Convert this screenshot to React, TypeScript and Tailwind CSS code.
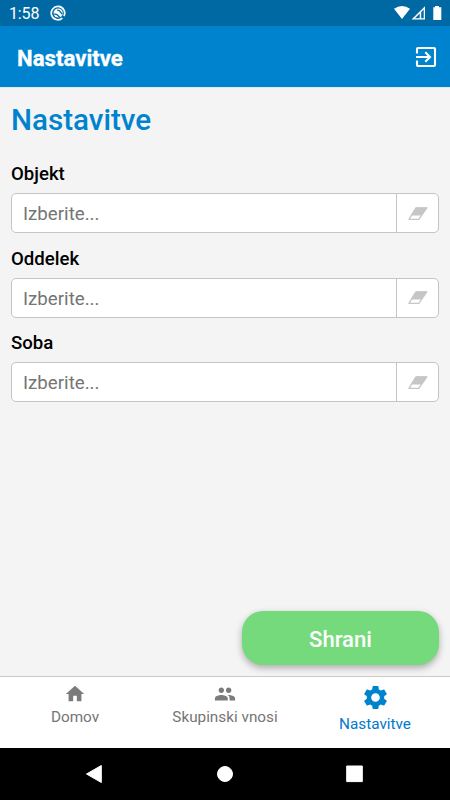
import React from "react";

function EraserIcon() {
  return (
    <svg className="mt-[1px]" width="20" height="14" viewBox="0 0 20 14">
      <path d="M7.7 .6H19.3L13.6 8.4H2.6Z" fill="#c6c6c6" />
      <path d="M7.9 1H18.8L10.8 12.4H1Z" fill="none" stroke="#c6c6c6" strokeWidth="1.3" strokeLinejoin="round" />
    </svg>
  );
}

function Field({ label }: { label: string }) {
  return (
    <div className="flex h-[84.5px] flex-col">
      <label className="h-[31px] pt-[1px] text-[18.6px] leading-[22px] font-medium text-black">{label}</label>
      <div className="flex h-[40px] overflow-hidden rounded-[5px] border border-[#c4c4c4] bg-white">
        <div className="flex flex-1 items-center pt-[2px] pl-[11px] text-[18.7px] leading-[22px] text-[#757575]">Izberite...</div>
        <button className="flex w-[42px] items-center justify-center border-l border-[#c4c4c4]">
          <EraserIcon />
        </button>
      </div>
    </div>
  );
}

export default function App() {
  return (
    <div className="flex h-[800px] w-[450px] flex-col overflow-hidden bg-[#f4f4f4] font-['Roboto',sans-serif]">
      <div className="flex h-[26px] shrink-0 items-center bg-[#0069a3] pl-[9px] text-white">
        <span className="w-[41px] pt-[2px] text-[16px] leading-[18px] tracking-[-0.15px]">1:58</span>
        <svg width="16" height="16" viewBox="0 0 16 16" fill="none">
          <path d="M12.4 13.1A6.7 6.7 0 1 1 13.9 11.2" stroke="white" strokeWidth="1.7" />
          <circle cx="8.2" cy="8" r="4.6" fill="white" />
          <path d="M4.2 8.8L6.9 9.6L10 12.4" stroke="#0069a3" strokeWidth="1.4" />
          <path d="M7.2 5.2L9.2 5.5L12.2 9" stroke="#0069a3" strokeWidth="1.3" />
        </svg>
        <svg className="ml-[328px]" width="50" height="18" viewBox="394 4 50 18">
          <path d="M394 8.7Q402 3.2 410 8.7L402 19Z" fill="white" />
          <path d="M411.5 19.6L425 6.2V19.6ZM419.7 13.4L415 18.2H419.7ZM421.2 12V18.2H423.7V9.5Z" fill="white" fillRule="evenodd" />
          <path d="M433.3 7.3H435V6H439V7.3H441.3V20H433.3Z" fill="white" />
        </svg>
      </div>
      <header className="flex h-[61px] shrink-0 items-center justify-between bg-[#0083cf] pr-[13px] pl-[17px] text-white">
        <h1 className="pt-[2px] text-[22.2px] leading-[26px] font-bold [-webkit-text-stroke:0.3px_white]">Nastavitve</h1>
        <svg className="mt-[1px]" width="22" height="22" viewBox="0 0 22 22" fill="none" stroke="white" strokeWidth="2.1">
          <path d="M2 7.5V3Q2 2 3 2H19Q20 2 20 3V19Q20 20 19 20H3Q2 20 2 19V14.5M1 11H14M10.3 6.3L15 11L10.3 15.7" />
        </svg>
      </header>
      <main className="flex flex-1 flex-col border-t border-[#dfe9ef] px-[11px] pt-[13px]">
        <h2 className="h-[61px] text-[29.6px] leading-[38px] font-medium text-[#0083cf]">Nastavitve</h2>
        <Field label="Objekt" />
        <Field label="Oddelek" />
        <Field label="Soba" />
        <button className="mt-auto mb-[11px] h-[54px] w-[197px] self-end rounded-[21px] bg-[#75da7b] pt-[2px] text-[22.1px] leading-[26px] font-medium text-white shadow-[0_3px_7px_rgba(0,0,0,0.3)]">
          Shrani
        </button>
      </main>
      <nav className="grid h-[72px] shrink-0 grid-cols-3 border-t border-[#c9c9c9] bg-white text-[15.3px] leading-[18px] text-[#757575]">
        <div className="flex flex-col items-center pt-[6px]">
          <svg width="22" height="22" viewBox="0 0 24 24" fill="#7b7b7b">
            <path d="M10 20v-6h4v6h5v-8h3L12 3 2 12h3v8z" />
          </svg>
          <span className="mt-[3px]">Domov</span>
        </div>
        <div className="flex flex-col items-center pt-[6px]">
          <svg width="22" height="22" viewBox="0 0 24 24" fill="#7b7b7b">
            <path d="M16 11c1.66 0 2.99-1.34 2.99-3S17.66 5 16 5s-3 1.34-3 3 1.34 3 3 3zm-8 0c1.66 0 2.99-1.34 2.99-3S9.66 5 8 5 5 6.34 5 8s1.34 3 3 3zm0 2c-2.33 0-7 1.17-7 3.5V19h14v-2.5c0-2.33-4.67-3.5-7-3.5zm8 0c-.29 0-.62.02-.97.05 1.16.84 1.97 1.97 1.97 3.45V19h6v-2.5c0-2.33-4.67-3.5-7-3.5z" />
          </svg>
          <span className="mt-[3px]">Skupinski vnosi</span>
        </div>
        <div className="flex flex-col items-center pt-[6px] text-[#0078cc]">
          <svg width="29" height="29" viewBox="0 0 24 24" fill="#0083cf">
            <path d="M19.14 12.94c.04-.3.06-.61.06-.94 0-.32-.02-.64-.07-.94l2.03-1.58c.18-.14.23-.41.12-.61l-1.92-3.32c-.12-.22-.37-.29-.59-.22l-2.39.96c-.5-.38-1.03-.7-1.62-.94l-.36-2.54c-.04-.24-.24-.41-.48-.41h-3.84c-.24 0-.43.17-.47.41l-.36 2.54c-.59.24-1.13.57-1.62.94l-2.39-.96c-.22-.08-.47 0-.59.22L2.74 8.87c-.12.21-.08.47.12.61l2.03 1.58c-.05.3-.09.63-.09.94s.02.64.07.94l-2.03 1.58c-.18.14-.23.41-.12.61l1.92 3.32c.12.22.37.29.59.22l2.39-.96c.5.38 1.03.7 1.62.94l.36 2.54c.05.24.24.41.48.41h3.84c.24 0 .44-.17.47-.41l.36-2.54c.59-.24 1.13-.56 1.62-.94l2.39.96c.22.08.47 0 .59-.22l1.92-3.32c.12-.22.07-.47-.12-.61l-2.01-1.58zM12 15.6c-1.98 0-3.6-1.62-3.6-3.6s1.62-3.6 3.6-3.6 3.6 1.62 3.6 3.6-1.62 3.6-3.6 3.6z" />
          </svg>
          <span className="mt-[3px]">Nastavitve</span>
        </div>
      </nav>
      <div className="h-[52px] shrink-0 bg-black">
        <svg width="450" height="52" viewBox="0 0 450 52" fill="white" stroke="white" strokeLinejoin="round">
          <path d="M86.5 26L101.3 17.5V34.5Z" />
          <circle cx="225" cy="26" r="7.5" />
          <rect x="346.7" y="18" width="15.6" height="15.6" />
        </svg>
      </div>
    </div>
  );
}
